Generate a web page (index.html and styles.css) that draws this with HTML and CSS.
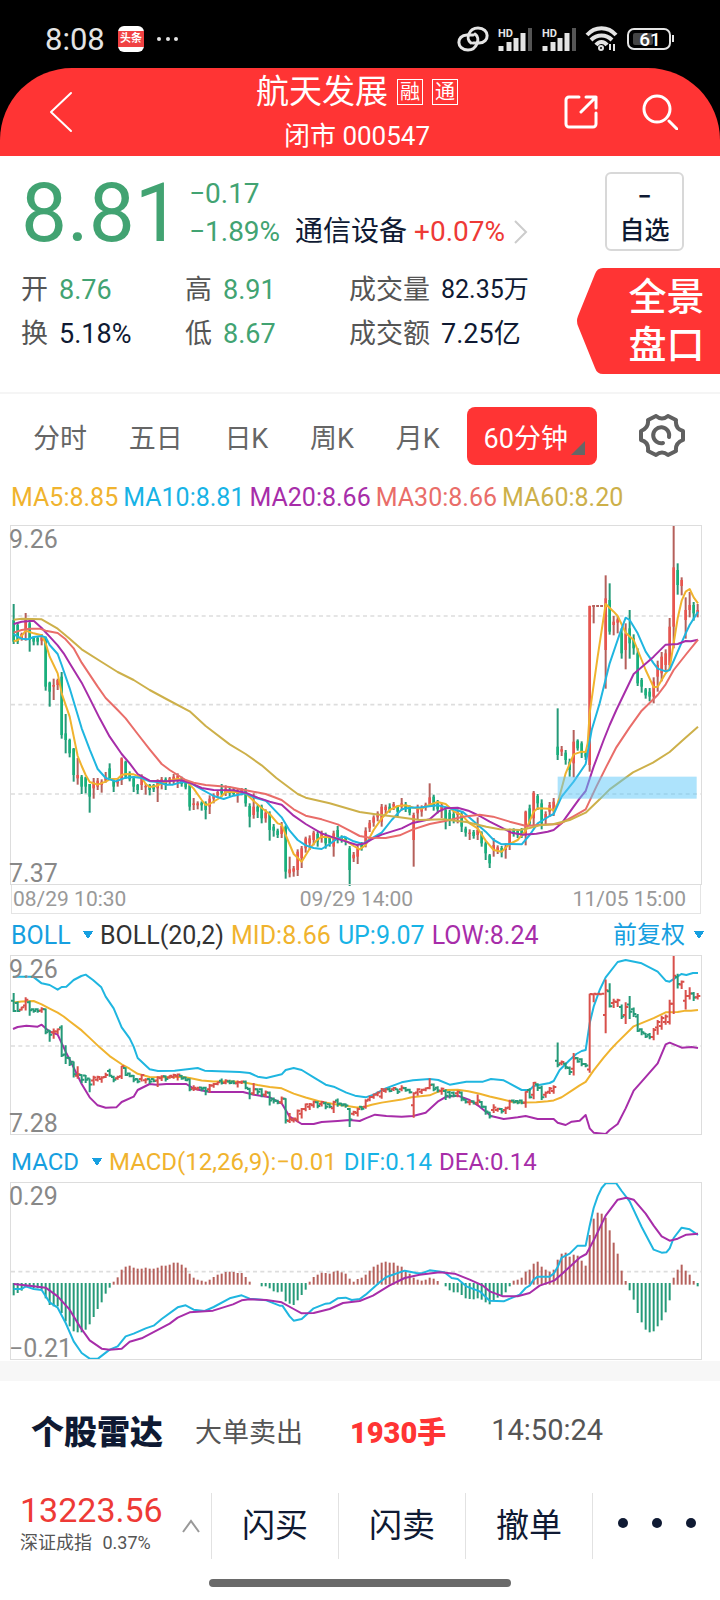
FILE: index.html
```html
<!DOCTYPE html>
<html lang="zh-CN">
<head>
  <meta charset="UTF-8">
  <meta name="viewport" content="width=device-width, initial-scale=1">
  <title>航天发展 000547</title>
  <link rel="stylesheet" href="styles.css">
</head>
<body>

  <div class="status-bar">
    <span class="clock">8:08</span>
    <span class="app-badge"><b>头条</b></span>
    <svg class="more-dots" width="24" height="6" viewBox="0 0 24 6"><circle cx="3" cy="3" r="2"/><circle cx="12" cy="3" r="2"/><circle cx="20" cy="3" r="2"/></svg>
    <div class="status-icons">
      <svg width="32" height="26" viewBox="0 0 32 26" fill="none" stroke="#e4e4e4" stroke-width="3" stroke-linecap="round">
        <path d="M14 17C8 13 12 2 21 2c12 0 12 15 1 15h-6"/>
        <path d="M18 8C24 12 20 24 11 24-1 24-1 9 10 9h6"/>
      </svg>
      <svg width="36" height="26" viewBox="0 0 36 26">
        <text x="1" y="11" class="hd">HD</text>
        <path d="M4 20v5M12 16v9M19 12v13M26 7v18" stroke="#e4e4e4" stroke-width="5"/>
        <path d="M33 2v23" stroke="#555" stroke-width="4"/>
      </svg>
      <svg width="36" height="26" viewBox="0 0 36 26">
        <text x="1" y="11" class="hd">HD</text>
        <path d="M4 20v5M12 16v9M19 12v13M26 7v18" stroke="#e4e4e4" stroke-width="5"/>
        <path d="M33 2v23" stroke="#555" stroke-width="4"/>
      </svg>
      <svg width="34" height="26" viewBox="0 0 34 26" fill="none" stroke="#e4e4e4" stroke-width="4">
        <path d="M2 9C10 0 23 0 31 9M6 14c6-6 15-6 21 0M11 19c3-4 8-4 11 0"/>
        <circle cx="16" cy="22" r="1"/>
        <path d="M25 18v6M29 18v7" stroke-width="2"/>
      </svg>
      <svg width="48" height="24" viewBox="0 0 48 24">
        <rect x="1" y="2" width="42" height="20" rx="6" fill="none" stroke="#e4e4e4" stroke-width="2"/>
        <rect x="6" y="6" width="20" height="12" rx="2" fill="#444"/>
        <path d="M46 8v7" stroke="#e4e4e4" stroke-width="2"/>
        <text x="23" y="19" class="battery">61</text>
      </svg>
    </div>
  </div>

  <header class="top-bar">
    <button class="icon-btn back" aria-label="返回">
      <svg width="24" height="42" viewBox="0 0 24 42"><path d="M22 2L2 21l20 19"/></svg>
    </button>
    <div class="title">
      <h1>航天发展 <span class="tag">融</span><span class="tag">通</span></h1>
      <p>闭市 000547</p>
    </div>
    <div class="actions">
      <button class="icon-btn" aria-label="分享">
        <svg width="34" height="34" viewBox="0 0 34 34"><path d="M15 2H5a3 3 0 0 0-3 3v24a3 3 0 0 0 3 3h24a3 3 0 0 0 3-3V18M17 17L32 2M22 2h10v11"/></svg>
      </button>
      <button class="icon-btn" aria-label="搜索">
        <svg width="36" height="36" viewBox="0 0 36 36"><circle cx="15" cy="15" r="13"/><path d="M27 27l8 8"/></svg>
      </button>
    </div>
  </header>

  <section class="quote">
    <div class="quote-top">
      <strong class="price">8.81</strong>
      <div class="change">
        <p>−0.17</p>
        <p>−1.89% <a href="#" class="sector">通信设备 <span class="red">+0.07%</span><svg width="15" height="26" viewBox="0 0 15 26"><path d="M2 2l11 11L2 24"/></svg></a></p>
      </div>
      <button class="watch"><span>−</span>自选</button>
    </div>
    <div class="quote-bottom">
      <dl class="stats">
        <div><dt>开</dt><dd class="green">8.76</dd></div>
        <div><dt>高</dt><dd class="green">8.91</dd></div>
        <div><dt>成交量</dt><dd class="volume">82.35万</dd></div>
        <div><dt>换</dt><dd>5.18%</dd></div>
        <div><dt>低</dt><dd class="green">8.67</dd></div>
        <div><dt>成交额</dt><dd>7.25亿</dd></div>
      </dl>
      <button class="panorama">
        <svg width="143" height="106" viewBox="0 0 143 106"><path d="M143 0H26q-6 0-8 6L1 48q-2 5 0 10l17 42q2 6 8 6h117z"/></svg>
        <span>全景<br>盘口</span>
      </button>
    </div>
  </section>

  <nav class="periods">
    <button>分时</button>
    <button>五日</button>
    <button>日K</button>
    <button>周K</button>
    <button>月K</button>
    <button class="active">60分钟</button>
    <button class="settings" aria-label="设置">
      <svg width="46" height="44" viewBox="0 0 46 44">
        <path d="M17 2Q23 7 29 2L37 6Q36 15 44 17V26Q36 29 37 37L29 41Q23 36 17 41L9 37Q10 28 2 26V17Q10 14 9 6Z"/>
        <path d="M30 23A8 8 0 1 0 24 29"/>
      </svg>
    </button>
  </nav>

  <main class="charts">
    <div class="legend">
      <span class="c-yellow">MA5:8.85</span>
      <span class="c-blue">MA10:8.81</span>
      <span class="c-purple">MA20:8.66</span>
      <span class="c-red">MA30:8.66</span>
      <span class="c-gold">MA60:8.20</span>
    </div>
    <div class="chart">
      <svg id="kline" viewBox="34 48 2070 1074"></svg>
      <span class="max">9.26</span>
      <span class="min">7.37</span>
    </div>
    <div class="dates"><span>08/29 10:30</span><span>09/29 14:00</span><span>11/05 15:00</span></div>

    <div class="legend indicator">
      <select aria-label="主图指标"><option>BOLL</option></select>
      <span class="c-dark">BOLL(20,2)</span>
      <span class="c-yellow">MID:8.66</span>
      <span class="c-blue">UP:9.07</span>
      <span class="c-purple">LOW:8.24</span>
      <select class="adjust" aria-label="复权"><option>前复权</option></select>
    </div>
    <div class="chart">
      <svg id="boll" viewBox="34 168 2070 534"></svg>
      <span class="max">9.26</span>
      <span class="min">7.28</span>
    </div>

    <div class="legend indicator second">
      <select aria-label="副图指标"><option>MACD</option></select>
      <span class="c-yellow">MACD(12,26,9):−0.01</span>
      <span class="c-blue">DIF:0.14</span>
      <span class="c-purple">DEA:0.14</span>
    </div>
    <div class="chart">
      <svg id="macd" viewBox="34 130 2070 528"></svg>
      <span class="max">0.29</span>
      <span class="min">−0.21</span>
    </div>
  </main>

  <section class="radar">
    <h2>个股雷达</h2>
    <span>大单卖出</span>
    <strong>1930手</strong>
    <time>14:50:24</time>
  </section>

  <footer class="trade-bar">
    <button class="index">
      <span class="index-text"><b>13223.56</b><small>深证成指 <i>0.37%</i></small></span>
      <svg width="20" height="14" viewBox="0 0 20 14"><path d="M2 13l8-11 8 11"/></svg>
    </button>
    <button>闪买</button>
    <button>闪卖</button>
    <button>撤单</button>
    <button class="more" aria-label="更多"><i></i><i></i><i></i></button>
  </footer>
  <div class="home-bar"></div>

  <script src="chart.js"></script>
</body>
</html>
```
FILE: styles.css
```css
* {
  box-sizing: border-box;
}

body {
  margin: 0;
  background: #fff;
  color: #0f1a33;
  font-family: Roboto, "Noto Sans CJK SC", sans-serif;
}

h1, h2, p, dl, dd {
  margin: 0;
}

button, select {
  margin: 0;
  padding: 0;
  border: none;
  background: none;
  color: inherit;
  font: inherit;
  cursor: pointer;
}

i {
  font-style: normal;
}

.green { color: #42a372; }
.red { color: #ee3a36; }
.c-yellow { color: #f0b32e; }
.c-blue { color: #17b3e6; }
.c-purple { color: #a72da9; }
.c-red { color: #e96d69; }
.c-gold { color: #cdb04a; }
.c-dark { color: #333; }

/* status bar */
.status-bar {
  display: flex;
  align-items: center;
  height: 148px;
  padding: 10px 45px 80px;
  background: #000;
  color: #e4e4e4;
}

.clock {
  width: 73px;
  font-size: 31px;
}

.app-badge {
  width: 26px;
  height: 26px;
  padding: 5px 0;
  border-radius: 6px;
  background: #fff;
}

.app-badge b {
  display: block;
  background: #f04142;
  color: #fff;
  font-size: 11px;
  line-height: 16px;
  text-align: center;
}

.more-dots {
  margin-left: 12px;
  fill: #e4e4e4;
}

.status-icons {
  display: flex;
  align-items: center;
  gap: 8px;
  margin-left: auto;
}

.status-icons svg {
  overflow: visible;
}

.hd {
  fill: #e4e4e4;
  font-size: 11px;
  font-weight: 700;
}

.battery {
  fill: #fff;
  font-size: 19px;
  font-weight: 500;
  text-anchor: middle;
}

/* title */
.top-bar {
  display: grid;
  grid-template-columns: 1fr auto 1fr;
  align-items: center;
  height: 88px;
  margin-top: -80px;
  padding: 0 42px 0 36px;
  border-radius: 72px 72px 0 0;
  background: #ff3434;
  color: #fff;
}

.icon-btn {
  display: flex;
}

.icon-btn svg {
  fill: none;
  stroke: #fff;
  stroke-width: 3;
  stroke-linecap: round;
  stroke-linejoin: round;
}

.back {
  margin-left: 13px;
}

.back svg {
  stroke-width: 2;
}

.title {
  text-align: center;
}

.title h1 {
  display: flex;
  align-items: center;
  font-size: 33px;
  font-weight: 400;
  line-height: 48px;
}

.tag {
  width: 26px;
  margin-left: 9px;
  border: 1px solid #fff;
  font-size: 20px;
  line-height: 24px;
}

.title p {
  font-size: 26px;
  line-height: 40px;
}

.actions {
  display: flex;
  justify-content: flex-end;
  align-items: center;
  gap: 44px;
}

/* quote */
.quote {
  padding-top: 16px;
  border-bottom: 2px solid #f5f5f5;
}

.quote-top {
  display: flex;
  padding: 0 36px 0 21px;
}

.price {
  width: 168px;
  color: #42a372;
  font-size: 82px;
  font-weight: 400;
  line-height: 82px;
}

.change {
  color: #42a372;
  font-size: 28px;
  line-height: 38px;
  padding-top: 3px;
}

.sector {
  margin-left: 8px;
  color: #0f1a33;
  text-decoration: none;
}

.sector svg {
  margin-left: 8px;
  vertical-align: -4px;
  fill: none;
  stroke: #ccc;
  stroke-width: 2;
}

.watch {
  width: 79px;
  height: 79px;
  margin-left: auto;
  padding-top: 6px;
  border: 2px solid #d8d8d8;
  border-radius: 6px;
  font-size: 25px;
  font-weight: 500;
  line-height: 36px;
}

.watch span {
  display: block;
  line-height: 32px;
}

.quote-bottom {
  display: flex;
  justify-content: space-between;
  align-items: flex-start;
  padding: 14px 0 18px 21px;
}

.stats {
  display: grid;
  grid-template-columns: 164px 164px auto;
  font-size: 27px;
  line-height: 44px;
}

.stats div {
  display: flex;
  gap: 11px;
}

.stats dt {
  color: #555;
}

.stats .volume {
  font-size: 25px;
}

.panorama {
  display: grid;
  color: #fff;
  font-size: 38px;
  font-weight: 500;
  line-height: 48px;
}

.panorama > * {
  grid-area: 1 / 1;
}

.panorama svg {
  fill: #ff3434;
}

.panorama span {
  padding: 5px 0 0 36px;
}

/* periods */
.periods {
  display: flex;
  justify-content: space-between;
  align-items: center;
  padding: 13px 35px 13px 33px;
  color: #666;
  font-size: 27px;
}

.periods .active {
  position: relative;
  width: 130px;
  height: 58px;
  margin-left: -14px;
  padding-right: 13px;
  border-radius: 8px;
  background: #ff3434;
  color: #fff;
}

.periods .active::after {
  content: "";
  position: absolute;
  right: 12px;
  bottom: 10px;
  border-left: 14px solid transparent;
  border-bottom: 14px solid #666;
}

.settings {
  display: flex;
}

.settings svg {
  fill: none;
  stroke: #606060;
  stroke-width: 4;
  stroke-linecap: round;
  stroke-linejoin: round;
}

/* charts */
.charts {
  padding: 0 19px 2px 11px;
  border-bottom: 20px solid #f7f7f7;
}

.legend {
  display: flex;
  align-items: center;
  gap: 5px;
  height: 48px;
  padding-bottom: 10px;
  font-size: 25px;
  white-space: nowrap;
}

.indicator {
  height: 42px;
  padding-bottom: 0;
  gap: 7px;
}

.second {
  height: 49px;
  padding-top: 6px;
  font-size: 24px;
}

.legend select {
  width: 82px;
  height: 32px;
  appearance: none;
  color: #169fe0;
  background: conic-gradient(from -34deg at 50% 100%, #169fe0 68deg, transparent 0) no-repeat right 12px / 10px 8px;
}

.second select {
  width: 91px;
}

.legend .adjust {
  width: 91px;
  margin: 0 -3px 0 auto;
  font-size: 24px;
}

.chart {
  position: relative;
}

.chart svg {
  display: block;
  width: 100%;
  overflow: visible;
  outline: 1px solid #ddd;
}

.max, .min {
  position: absolute;
  left: -2px;
  color: #888;
  font-size: 25px;
  line-height: 28px;
}

.max { top: 0; }
.min { bottom: -4px; }

.dates {
  display: grid;
  grid-template-columns: 1fr auto 1fr;
  height: 30px;
  padding: 0 14px 0 1px;
  border: 1px solid #e4e4e4;
  color: #999;
  font-size: 21px;
  line-height: 28px;
}

.dates span:nth-child(2) {
  padding-left: 14px;
}

.dates span:last-child {
  text-align: right;
}

/* chart parts, 3 units to a pixel */
.grid { stroke: #ddd; stroke-width: 5; stroke-dasharray: 12 10; }
.line { fill: none; stroke-width: 6; stroke-linejoin: round; }
.line.c-yellow { stroke: #f0b32e; }
.line.c-blue { stroke: #1fb6e0; }
.line.c-purple { stroke: #a72da9; }
.line.c-red { stroke: #e96d69; }
.line.c-gold { stroke: #cdb04a; }
.wick, .tick { stroke-width: 6; fill: none; }
.body { stroke-width: 8; }
.up { stroke: #b5605b; }
.down { stroke: #259a78; }
.body.up { stroke: #e8554f; }
.body.down { stroke: #19b07c; }
#boll .up { stroke: #d8504b; }
.band { fill: #5cc8fa; fill-opacity: .5; }

/* radar */
.radar {
  display: flex;
  align-items: center;
  height: 98px;
  padding-left: 31px;
  color: #555;
  font-size: 27px;
}

.radar h2 {
  color: #0f1a33;
  font-size: 33px;
  font-weight: 900;
}

.radar span {
  margin-left: 32px;
}

.radar strong {
  margin-left: 47px;
  color: #ff3434;
  font-size: 29px;
  font-weight: 900;
}

.radar time {
  margin-left: 45px;
  font-size: 29px;
}

/* trade bar */
.trade-bar {
  display: grid;
  grid-template-columns: 211px 1fr 1fr 1fr 128px;
  margin-top: 14px;
  height: 60px;
  font-size: 33px;
}

.trade-bar button {
  padding-bottom: 6px;
}

.trade-bar button + button {
  border-left: 1px solid #e2e2e2;
}

.trade-bar .index {
  display: flex;
  align-items: center;
  justify-content: space-between;
  padding: 0 10px 0 20px;
  text-align: left;
}

.index b {
  display: block;
  color: #ee3a36;
  font-size: 34px;
  font-weight: 400;
  line-height: 34px;
}

.index small {
  display: block;
  color: #555;
  font-size: 18px;
  line-height: 32px;
  white-space: nowrap;
}

.index small i {
  margin-left: 6px;
}

.index svg {
  fill: none;
  stroke: #999;
  stroke-width: 2;
}

.more {
  display: flex;
  align-items: center;
  justify-content: center;
  gap: 24px;
}

.more i {
  width: 10px;
  height: 10px;
  border-radius: 50%;
  background: #0f1a33;
}

.home-bar {
  width: 42%;
  height: 8px;
  margin: 26px auto 12px;
  border-radius: 4px;
  background: #6a6a6a;
}
```
FILE: chart.js
```js
// candles: direction (+ up, - down), high, body top, body bottom, low
const candles = `
-282 330 395 402|-336 345 395 402|+368 372 388 392|+309 325 360 392|-330 340 390 425|-378 384 395 406|-378 384 395 406|+372 382 392 406
-380 384 530 542|-515 518 545 590|+506 525 530 570|+506 510 525 540|-486 500 675 686|-612 670 690 730|-686 690 730 742|-714 716 795 815
+744 795 805 824|-795 800 830 852|-800 802 830 850|-822 822 860 908|+804 815 835 866|+804 812 830 840|+808 815 825 848|+786 800 812 818
-760 775 805 810|-804 812 830 846|+804 812 820 830|+742 745 808 825|-752 755 800 806|-784 790 808 814|-800 805 830 846|-822 825 840 852
+793 800 825 840|+820 828 832 854|-822 825 840 856|-822 825 838 846|+808 815 835 876|+801 808 820 838|-802 808 825 840|+801 805 815 824
+792 800 812 824|+790 797 806 834|-800 804 822 830|-810 816 832 838|-822 826 890 902|+864 880 885 900|+874 880 886 898|-874 878 886 902
-874 880 900 928|+856 866 890 912|+850 856 866 880|+842 846 856 864|-822 836 850 860|+826 836 848 858|-830 840 850 858|-832 840 852 858
+834 845 852 878|+834 840 846 856|-834 842 880 890|-880 888 920 952|+850 890 915 926|-884 890 905 924|-884 890 925 940|+898 908 925 938
-904 912 960 992|-942 950 962 980|-956 962 975 984|+936 948 972 984|-946 950 1085 1106|+1040 1078 1090 1102|+1068 1075 1085 1100|+1018 1025 1080 1098
+1008 1015 1045 1074|+980 985 1015 1028|+976 985 1000 1020|+962 968 990 1006|-966 972 995 1010|+962 970 982 998|-968 978 1000 1016|-980 984 1000 1010
+962 970 1010 1040|-948 960 982 1000|-976 980 990 998|-980 984 992 1006|-1008 1015 1080 1128|+1026 1034 1045 1056|+1006 1015 1040 1062|-996 1000 1012 1022
+952 962 1000 1012|+930 938 955 966|+916 922 938 950|+904 910 922 934|+882 890 935 950|+884 890 900 912|-880 890 900 908|+876 882 890 900
-886 890 905 920|+864 880 890 902|-876 884 896 906|-886 892 908 916|+908 915 990 1070|+884 890 910 930|+886 892 905 920|+878 884 892 902
+820 862 882 890|-854 860 890 902|-870 880 898 910|+878 886 900 924|-890 900 930 958|-900 908 930 948|-904 912 930 940|+898 905 915 940
-904 912 950 966|-950 956 968 980|+958 968 972 990|-960 966 978 986|+922 960 975 990|-964 970 1000 1010|-994 1000 1030 1050|-1032 1036 1060 1074
+984 1005 1020 1040|+1006 1012 1020 1032|-1008 1014 1028 1042|+1000 1010 1020 1046|+956 965 1005 1020|-955 960 972 980|-958 963 974 984|-954 960 975 984
+902 905 975 1006|-884 895 940 948|+843 848 925 952|-852 858 880 900|-868 880 940 958|+904 912 925 944|+876 885 905 920|+864 875 900 918
-595 710 735 750|+708 718 725 738|-720 728 750 764|-746 755 780 800|+660 695 760 802|-688 692 715 722|-694 700 730 744|-724 730 740 750
+287 288 765 785|+286 286 290 340|+286 286 290 290|+286 286 290 290|+196 265 420 536|-220 270 365 374|+318 335 345 376|+318 328 338 370
-355 370 430 446|+340 370 420 478|-300 355 400 446|-373 385 415 434|-415 430 520 528|-504 510 530 548|-534 538 556 566|-534 545 560 574
+502 515 560 580|+452 465 500 545|+426 440 490 514|+418 430 465 482|+324 350 465 480|+48 172 350 415|-160 180 225 254|+202 210 228 256
+262 300 330 386|+246 285 300 322|-276 285 310 332|+282 300 308 322`
  .trim().split(/[|\n]/).map(c => ({ up: c[0] === '+', v: c.slice(1).split(' ').map(Number) }));

const ma5 = '42,394 54,391 66,378 78,362 90,366 102,370 126,376 138,400 150,440 162,465 174,490 186,550 210,620 234,738 246,768 258,795 270,816 294,824 318,815 330,808 354,806 366,795 378,792 402,793 426,802 438,822 450,831 470,828 486,820 510,812 534,806 558,812 582,836 606,870 618,885 630,882 660,864 678,846 702,845 738,850 762,873 786,894 810,912 834,940 846,944 858,975 882,1032 906,1055 930,1016 950,992 966,980 990,982 1014,985 1038,992 1062,1008 1080,1018 1098,1005 1122,960 1146,925 1170,900 1194,888 1218,886 1242,893 1266,896 1290,884 1314,876 1338,882 1362,904 1386,915 1410,940 1434,955 1458,992 1482,1020 1506,1025 1530,1002 1554,990 1578,962 1602,905 1614,895 1650,896 1662,902 1674,880 1698,790 1722,733 1746,725 1758,726 1764,700 1770,610 1794,440 1818,282 1842,305 1854,318 1878,368 1902,390 1914,420 1938,480 1962,532 1974,530 1998,490 2010,475 2022,400 2034,325 2046,272 2058,245 2070,237 2082,262 2095,280';
const ma10 = '42,372 54,380 66,386 84,388 102,381 126,378 138,382 150,405 174,432 186,465 210,535 246,655 270,718 294,777 318,804 348,814 378,803 402,801 426,804 450,814 474,816 498,824 520,824 546,816 570,818 606,838 642,858 672,867 702,857 738,850 762,862 798,872 846,922 870,962 894,990 918,1006 942,1014 966,1017 990,1002 1014,985 1034,980 1062,994 1090,1002 1116,985 1146,968 1176,930 1206,898 1230,893 1266,892 1314,886 1350,895 1390,906 1422,934 1458,965 1482,990 1506,1003 1530,1002 1566,1003 1590,975 1614,940 1650,918 1662,912 1686,860 1722,815 1758,762 1776,660 1800,580 1830,460 1860,372 1878,323 1890,330 1914,370 1938,425 1962,460 1974,476 1998,484 2010,480 2034,425 2058,370 2070,345 2095,305';
const ma20 = '42,342 66,335 102,332 126,354 150,380 174,406 192,430 210,460 246,518 270,565 300,625 330,680 366,732 390,760 414,792 450,812 500,814 546,811 570,818 606,834 642,840 702,841 738,848 774,863 810,875 846,884 882,917 918,942 966,970 1002,983 1038,994 1072,1005 1096,1000 1116,988 1146,974 1206,955 1236,940 1290,928 1316,905 1338,895 1374,893 1406,902 1440,918 1470,935 1506,953 1536,968 1570,974 1610,971 1644,965 1662,960 1686,940 1722,890 1740,865 1758,843 1782,770 1812,690 1830,645 1850,600 1902,492 1962,440 1998,404 2034,402 2058,393 2074,394 2095,389';
const ma30 = '42,368 66,360 90,356 120,356 138,362 174,369 198,388 222,415 246,458 294,530 318,564 354,600 378,625 414,672 450,718 486,762 510,780 534,795 558,810 582,818 618,825 690,831 750,843 798,852 846,870 882,898 918,917 966,928 1014,943 1050,962 1080,978 1110,983 1158,984 1200,976 1240,958 1290,942 1340,932 1390,920 1440,914 1480,920 1530,935 1580,948 1625,944 1680,942 1720,920 1758,898 1790,830 1820,770 1850,712 1890,652 1926,602 1974,555 1998,523 2022,480 2060,432 2095,389';
const ma60 = '42,329 66,326 126,328 174,356 210,386 246,418 306,456 354,486 402,510 450,540 500,567 570,604 618,648 690,703 738,732 786,766 830,804 894,852 918,863 990,880 1080,906 1122,912 1200,922 1260,930 1330,928 1400,936 1460,950 1500,958 1560,960 1590,954 1620,946 1660,943 1710,930 1758,908 1800,868 1830,838 1900,787 1960,758 2010,726 2050,690 2095,650';

const bollUp = '40,230 100,230 126,250 150,255 174,269 186,261 200,260 222,240 245,228 258,224 280,240 305,262 318,290 342,325 366,382 390,415 402,440 414,474 450,508 475,513 525,512 594,504 615,512 720,516 750,519 774,530 800,534 846,523 858,510 882,504 906,510 942,532 978,554 1002,560 1040,578 1066,587 1098,592 1122,584 1158,565 1206,547 1240,541 1290,537 1316,540 1350,554 1400,545 1450,545 1474,537 1512,541 1566,570 1590,570 1602,558 1650,549 1662,543 1680,510 1710,480 1730,462 1746,453 1758,450 1770,370 1782,320 1800,270 1818,232 1854,186 1878,180 1926,190 1974,215 1998,242 2010,245 2030,232 2045,222 2060,225 2080,219 2095,219';
const bollLow = '40,387 54,381 80,377 114,380 126,374 138,385 150,395 174,404 198,455 222,503 246,552 270,592 294,616 318,623 350,622 366,606 402,590 414,570 450,552 470,554 500,552 560,552 582,566 630,576 730,576 762,584 810,592 846,610 870,650 906,672 942,672 966,666 1014,663 1050,660 1080,663 1098,655 1126,644 1160,648 1206,650 1240,648 1278,638 1314,605 1340,590 1374,587 1410,600 1440,620 1474,648 1512,657 1554,652 1578,648 1614,657 1662,657 1674,668 1698,675 1716,665 1740,662 1758,645 1770,685 1782,698 1818,702 1830,690 1854,672 1878,625 1902,572 1926,545 1974,490 1998,433 2010,428 2046,443 2076,441 2095,444';

const macdBars = [467,460,453,443,440,445,446,450,476,496,500,500,520,545,560,575,578,578,570,554,532,508,488,462,444,426,413,390,381,378,384,387,387,384,387,387,384,378,378,375,369,369,375,384,402,414,420,423,426,420,412,405,402,397,396,397,400,400,412,426,432,432,440,440,446,455,458,456,485,492,496,482,466,450,426,412,405,399,400,402,396,393,398,402,417,426,418,414,405,393,381,375,369,366,369,369,378,381,393,402,414,420,423,420,414,417,424,432,440,452,458,458,466,476,478,479,476,480,488,494,482,474,468,458,440,423,420,414,396,390,372,366,381,390,396,390,360,342,339,351,345,348,363,378,286,237,219,222,234,272,309,342,393,424,452,480,520,548,570,578,575,560,542,518,482,414,390,375,393,405,424,440];
const dif = '42,448 66,448 78,440 102,448 126,451 150,488 174,504 198,550 222,605 246,640 270,657 295,657 330,630 354,620 378,590 402,582 438,566 462,558 486,538 534,503 558,497 582,510 615,514 642,502 690,476 726,467 750,477 800,482 840,498 848,498 870,530 882,543 906,538 942,506 978,492 990,491 1014,476 1038,474 1056,481 1080,478 1098,465 1140,428 1160,412 1215,393 1250,400 1266,401 1290,392 1334,398 1356,415 1374,418 1400,440 1440,455 1470,483 1512,485 1560,465 1578,445 1590,438 1602,420 1614,411 1650,411 1662,402 1674,382 1686,354 1710,342 1734,318 1758,318 1770,258 1782,205 1794,170 1806,145 1818,131 1850,131 1866,154 1890,185 1926,262 1962,330 1986,339 2000,338 2010,326 2022,295 2046,264 2070,269 2095,286';
const dea = '42,433 102,440 138,444 174,470 210,510 240,560 270,602 306,627 330,630 366,627 390,606 426,596 510,552 534,534 570,518 640,513 700,494 726,482 750,479 800,481 846,488 882,508 906,521 942,520 990,508 1030,490 1080,484 1120,468 1170,437 1215,415 1260,405 1320,398 1365,402 1410,420 1450,438 1470,455 1510,470 1554,470 1590,460 1620,438 1665,422 1690,400 1740,354 1760,343 1782,302 1818,228 1854,180 1880,174 1902,180 1938,222 1962,258 1986,290 2010,303 2034,297 2060,285 2095,282';

const x = i => 42 + i * 12;
// price axis of the BOLL chart is shorter than the main one
const bollY = y => 168 + (y - 48) * 0.475;

const grid = y => `<path class="grid" d="M34 ${y}H2104"/>`;
const line = (color, points) => `<polyline class="line ${color}" points="${points}"/>`;

function drawKline() {
  let html = [318, 584, 852].map(grid).join('');
  candles.forEach((c, i) => {
    const [high, top, bottom, low] = c.v;
    const dir = c.up ? 'up' : 'down';
    html += `<path class="wick ${dir}" d="M${x(i)} ${high}V${low}"/>`;
    html += `<path class="body ${dir}" d="M${x(i)} ${top}V${bottom}"/>`;
  });
  html += '<path class="wick up" stroke-dasharray="8 4" d="M1778 288H1818"/>';
  html += line('c-yellow', ma5) + line('c-blue', ma10) + line('c-purple', ma20)
    + line('c-red', ma30) + line('c-gold', ma60);
  html += '<rect class="band" x="1674" y="800" width="417" height="66"/>';
  document.getElementById('kline').innerHTML = html;
}

function drawBoll() {
  let html = grid(438);
  const mid = ma20.split(' ').map(p => {
    const [px, py] = p.split(',');
    return px + ',' + bollY(py);
  }).join(' ');
  html += line('c-blue', bollUp) + line('c-yellow', mid) + line('c-purple', bollLow);
  candles.forEach((c, i) => {
    const [high, top, bottom, low] = c.v.map(bollY);
    const open = c.up ? bottom : top;
    const close = c.up ? top : bottom;
    html += `<path class="tick ${c.up ? 'up' : 'down'}" d="M${x(i)} ${high}V${low}M${x(i) - 8} ${open}h8M${x(i)} ${close}h8"/>`;
  });
  document.getElementById('boll').innerHTML = html;
}

function drawMacd() {
  let html = grid(396);
  macdBars.forEach((y, i) => {
    if (y === 432) return;
    html += `<path class="wick ${y < 432 ? 'up' : 'down'}" d="M${x(i)} ${y < 432 ? 435 : 430}V${y}"/>`;
  });
  html += line('c-blue', dif) + line('c-purple', dea);
  document.getElementById('macd').innerHTML = html;
}

drawKline();
drawBoll();
drawMacd();
```
